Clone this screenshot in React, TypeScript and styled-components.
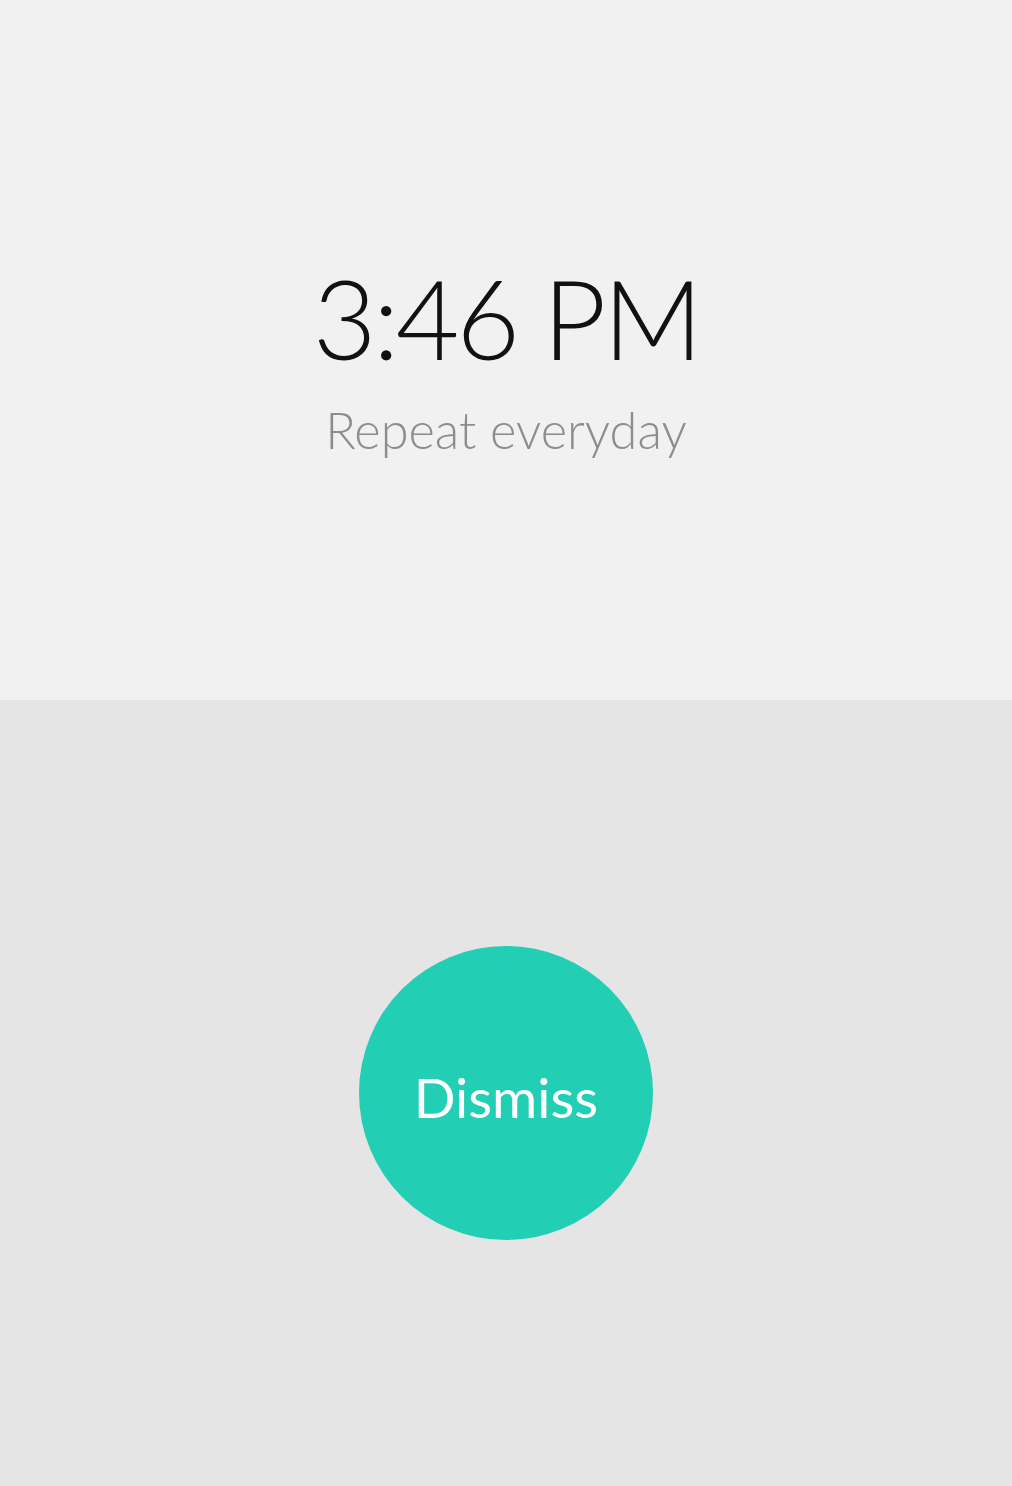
import styled, { createGlobalStyle } from 'styled-components';

const GlobalStyle = createGlobalStyle`
  html, body {
    margin: 0;
    padding: 0;
    background: #e5e5e5;
  }
  body {
    font-family: Lato, 'Open Sans', sans-serif;
  }
`;

const AlarmScreen = styled.div`
  display: flex;
  flex-direction: column;
  width: 100%;
  min-height: 1486px;
`;

const TimePanel = styled.section`
  display: flex;
  flex-direction: column;
  align-items: center;
  height: 700px;
  padding-top: 262px;
  box-sizing: border-box;
  background: #f1f1f1;
`;

const Time = styled.h1`
  margin: 0;
  font-size: 110px;
  font-weight: 300;
  line-height: 1;
  letter-spacing: -3.5px;
  color: #111111;
`;

const Repeat = styled.p`
  margin: 33px 0 0;
  font-size: 50.5px;
  font-weight: 300;
  line-height: 1;
  color: #8a8e8e;
`;

const ActionPanel = styled.section`
  display: flex;
  flex: 1;
  align-items: center;
  justify-content: center;
  height: 786px;
  background: #e5e5e5;
`;

const DismissButton = styled.button`
  display: flex;
  align-items: center;
  justify-content: center;
  width: 294px;
  height: 294px;
  border: none;
  border-radius: 50%;
  background: #22cfb5;
  color: #ffffff;
  font-family: Lato, 'Open Sans', sans-serif;
  font-size: 55px;
  font-weight: 400;
  padding: 8px 0 0;
  cursor: pointer;
`;

function App() {
  return (
    <>
      <GlobalStyle />
      <AlarmScreen>
        <TimePanel>
          <Time>3:46 PM</Time>
          <Repeat>Repeat everyday</Repeat>
        </TimePanel>
        <ActionPanel>
          <DismissButton>Dismiss</DismissButton>
        </ActionPanel>
      </AlarmScreen>
    </>
  );
}

export default App;
